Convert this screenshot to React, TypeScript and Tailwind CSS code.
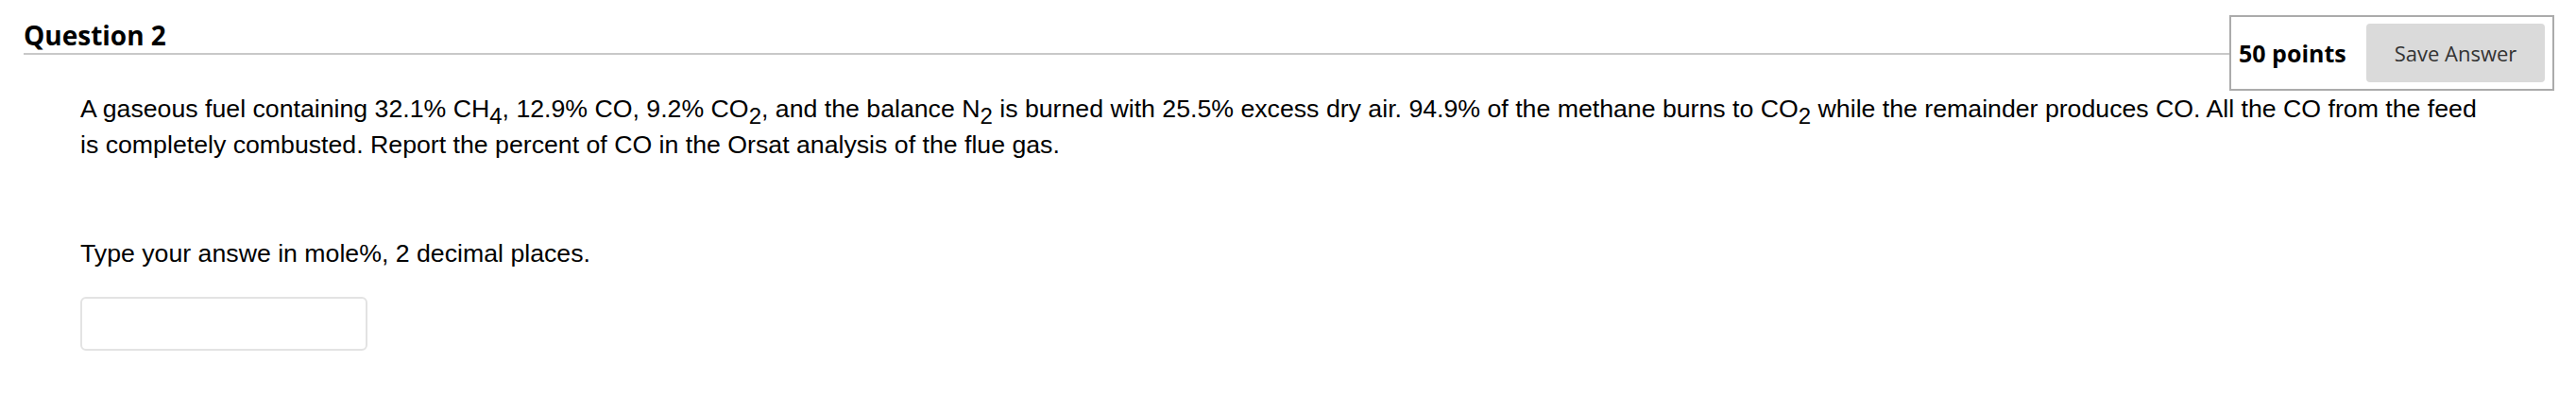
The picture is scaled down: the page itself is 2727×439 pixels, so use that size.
import { useState } from 'react';

function Sub({ children }: { children: React.ReactNode }) {
  return <sub className="relative bottom-[-0.3em] text-[0.9em] leading-none">{children}</sub>;
}

export default function App() {
  const [answer, setAnswer] = useState('');

  return (
    <div className="h-[439px] w-full bg-white text-black">
      <div className="flex items-start pl-[25px] pr-[23px] pt-[16px]">
        <h3
          className="h-[42px] flex-1 border-b-2 border-[#c8c8c8] pt-[7px] text-[28px] font-bold leading-[28px]"
          style={{ fontFamily: '"Open Sans", sans-serif' }}
        >
          Question 2
        </h3>
        <div
          className="flex h-[80px] w-[344px] shrink-0 items-center justify-between border-2 border-[#ababab] pl-[8px] pr-[8px]"
          style={{ fontFamily: '"Open Sans", sans-serif' }}
        >
          <span className="text-[25px] font-bold leading-none">50 points</span>
          <button className="h-[62px] w-[189px] rounded-[4px] bg-[#dadada] text-[22px] text-[#333]">
            Save Answer
          </button>
        </div>
      </div>

      <div
        className="pl-[85px] pr-[90px] text-[26.7px] leading-[38px]"
        style={{ fontFamily: '"Liberation Sans", Arial, sans-serif' }}
      >
        <p>
          A gaseous fuel containing 32.1% CH<Sub>4</Sub>, 12.9% CO, 9.2% CO<Sub>2</Sub>, and the balance N
          <Sub>2</Sub> is burned with 25.5% excess dry air. 94.9% of the methane burns to CO<Sub>2</Sub> while the
          remainder produces CO. All the CO from the feed is completely combusted. Report the percent of CO in the
          Orsat analysis of the flue gas.
        </p>
        <p className="mt-[77px]">Type your answe in mole%, 2 decimal places.</p>
        <input
          value={answer}
          onChange={(e) => setAnswer(e.target.value)}
          className="mt-[27px] h-[57px] w-[304px] rounded-[6px] border-2 border-[#e3e3e3] px-3 outline-none"
        />
      </div>
    </div>
  );
}
